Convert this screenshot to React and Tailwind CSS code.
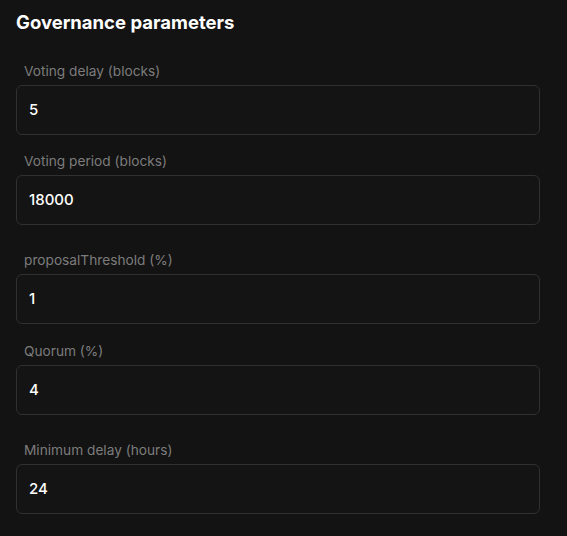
import React from "react";

const fields = [
  { label: "Voting delay (blocks)", value: "5", mt: "mt-[25px]" },
  { label: "Voting period (blocks)", value: "18000", mt: "mt-4" },
  { label: "proposalThreshold (%)", value: "1", mt: "mt-[25px]" },
  { label: "Quorum (%)", value: "4", mt: "mt-[17px]" },
  { label: "Minimum delay (hours)", value: "24", mt: "mt-[25px]" },
];

export default function App() {
  return (
    <div
      className="min-h-screen w-full bg-[#131313] px-4 pt-2 pb-6"
      style={{ fontFamily: "Inter, 'Liberation Sans', sans-serif" }}
    >
      <h2 className="text-[18.5px] leading-7 font-bold text-white">Governance parameters</h2>

      <div className="w-[524px]">
        {fields.map((f) => (
          <div key={f.label} className={f.mt}>
            <label className="block pl-2 text-[13.7px] leading-5 text-[#7c7c7c]">{f.label}</label>
            <div className="mt-1 flex h-[50px] items-center rounded-md border border-[#303030] bg-[#141414] px-3">
              <span className="text-[15px] font-medium text-white">{f.value}</span>
            </div>
          </div>
        ))}
      </div>
    </div>
  );
}
